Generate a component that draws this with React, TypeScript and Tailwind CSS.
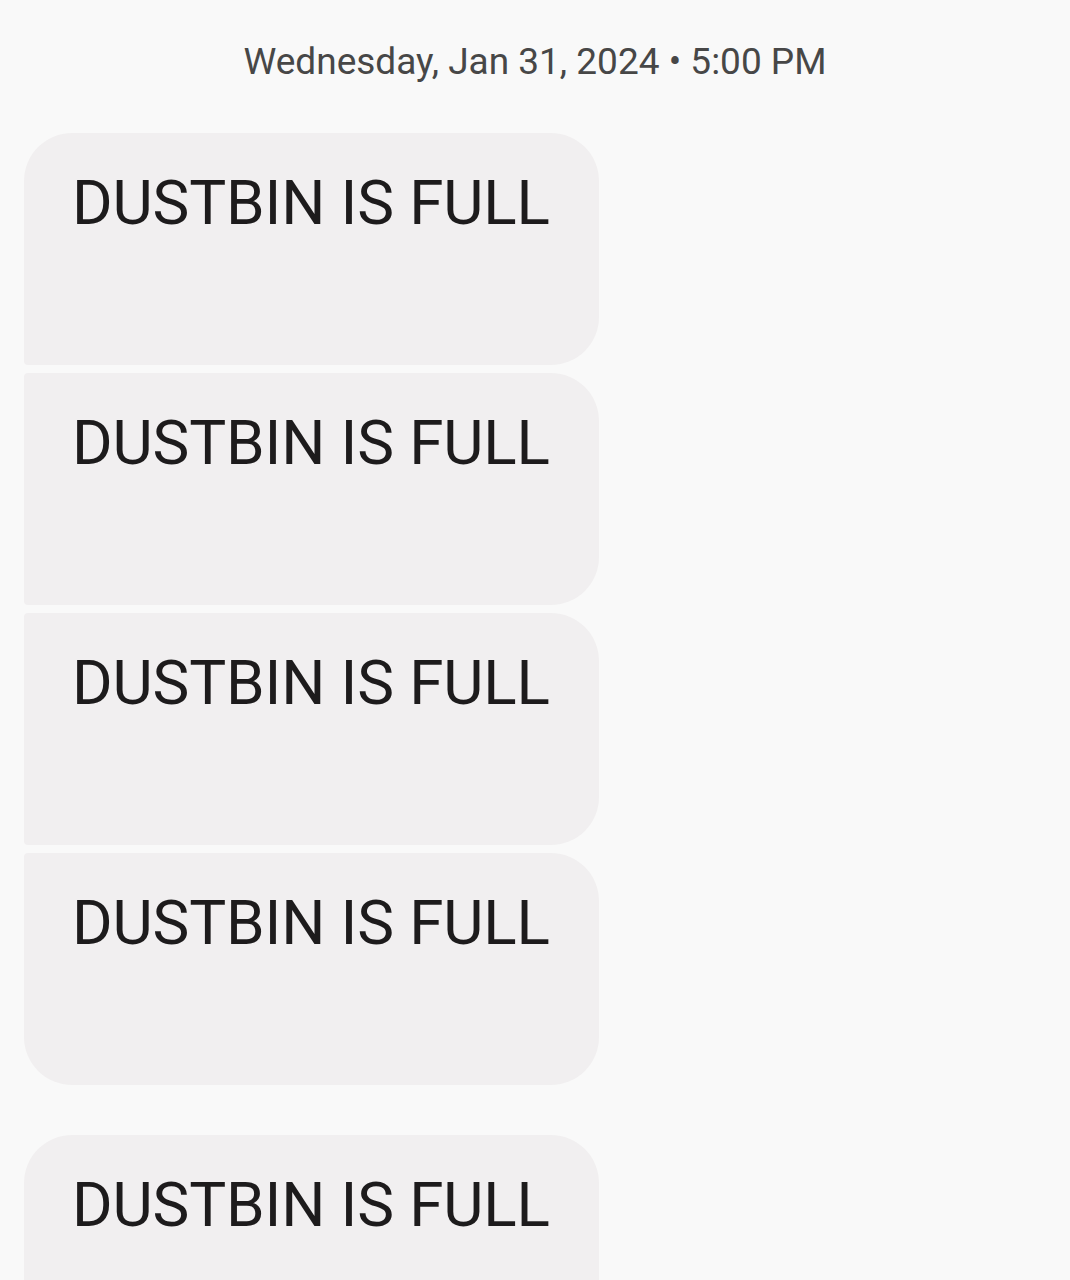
const messages = [
  { id: 1, text: 'DUSTBIN IS FULL', shape: 'rounded-[48px] rounded-bl-[4px]' },
  { id: 2, text: 'DUSTBIN IS FULL', shape: 'rounded-[48px] rounded-tl-[4px] rounded-bl-[4px]' },
  { id: 3, text: 'DUSTBIN IS FULL', shape: 'rounded-[48px] rounded-tl-[4px] rounded-bl-[4px]' },
  { id: 4, text: 'DUSTBIN IS FULL', shape: 'rounded-[48px] rounded-tl-[4px]' },
];

function Bubble({ text, shape }: { text: string; shape: string }) {
  return (
    <div className={`w-[575px] h-[232px] bg-[#f1eff0] pl-[48px] pt-[39px] ${shape}`}>
      <p className="text-[62px] leading-none text-[#1d1b1c] tracking-[-0.15px]">{text}</p>
    </div>
  );
}

export default function App() {
  return (
    <main
      className="min-h-screen h-[1280px] overflow-hidden bg-[#f9f9f9] px-6"
      style={{ fontFamily: 'Roboto, "Noto Sans", Arial, sans-serif' }}
    >
      <div className="pt-[41px] pb-[50px] text-center text-[37px] leading-[42px] text-[#474747]">
        Wednesday, Jan 31, 2024 • 5:00 PM
      </div>

      <div className="flex flex-col gap-2">
        {messages.map(m => (
          <Bubble key={m.id} text={m.text} shape={m.shape} />
        ))}
      </div>

      <div className="mt-[50px]">
        <Bubble text="DUSTBIN IS FULL" shape="rounded-[48px]" />
      </div>
    </main>
  );
}
